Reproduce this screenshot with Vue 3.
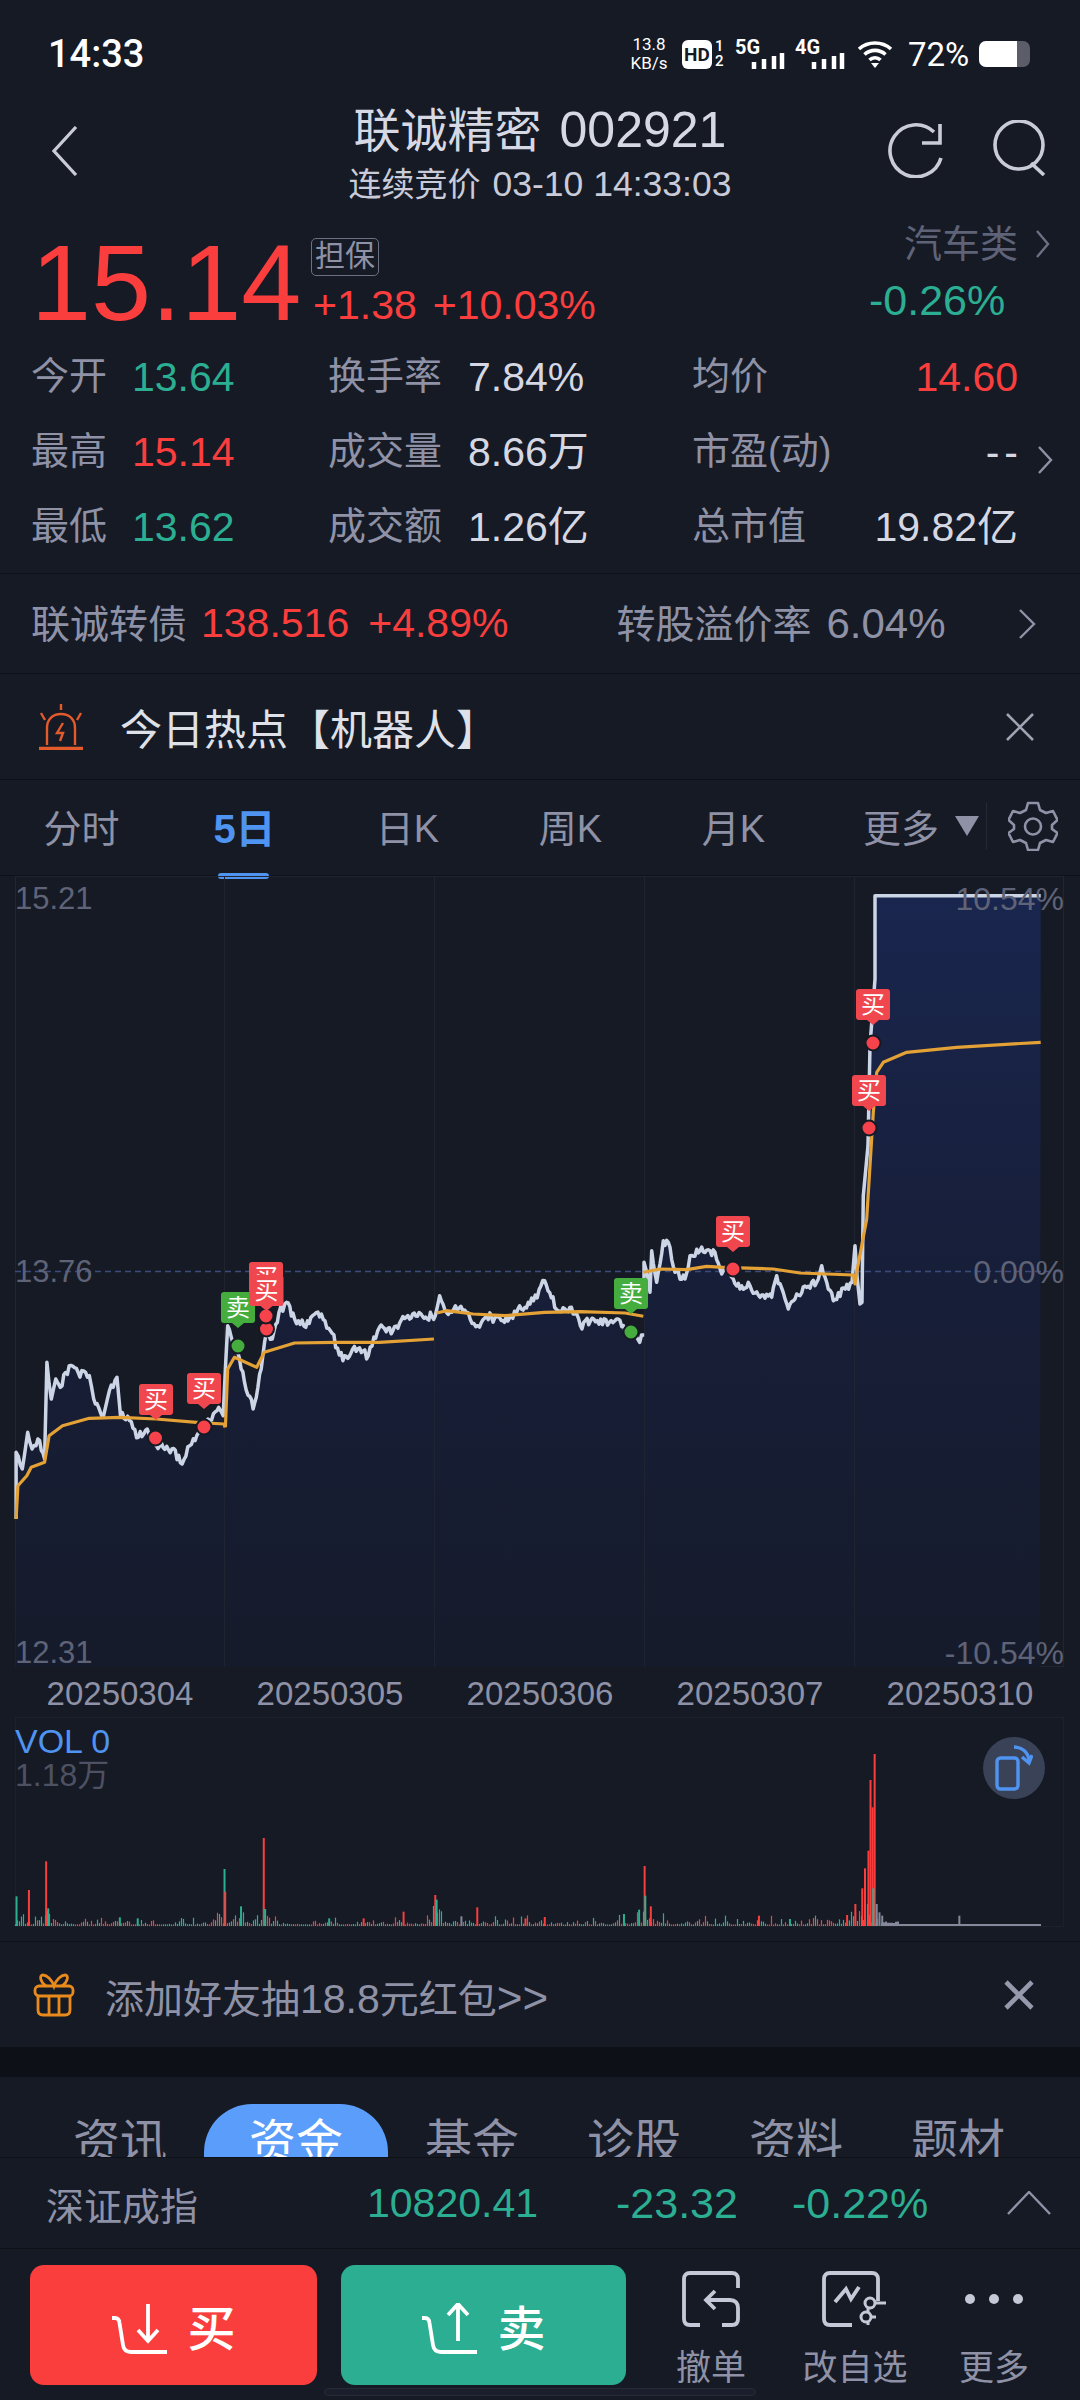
<template>
  <div class="page">
    <div class="status">
      <span class="clock">14:33</span>
      <div class="status-right">
        <div class="speed"><span>13.8</span><span>KB/s</span></div>
        <div class="hd">HD</div>
        <div class="sim"><span>1</span><span>2</span></div>
        <div class="net">
          <span>5G</span>
          <svg width="34" height="16" viewBox="0 0 34 16"><path d="M3 16V9M13 16V6M23 16V3M31 16V0" stroke="#fff" stroke-width="4.5" /></svg>
        </div>
        <div class="net net2">
          <span>4G</span>
          <svg width="34" height="16" viewBox="0 0 34 16"><path d="M3 16V9M13 16V6M23 16V3M31 16V0" stroke="#fff" stroke-width="4.5" /></svg>
        </div>
        <svg class="wifi" width="36" height="28" viewBox="0 0 36 28" fill="none" stroke="#fff" stroke-width="3.6">
          <path d="M2 9C11 1 25 1 34 9" />
          <path d="M7.5 14.500C13.500 9 22.500 9 28.500 14.500" />
          <path d="M12.500 20C15.500 17 20.500 17 23.500 20" />
          <path d="M18 28l-4-5h8z" fill="#fff" stroke="none" />
        </svg>
        <span class="batt-text">72%</span>
        <div class="battery"><div class="battery-fill"></div></div>
      </div>
    </div>

    <header class="head">
      <svg class="back" width="26" height="50" viewBox="0 0 26 50" fill="none" stroke="#c9ccd8" stroke-width="3.200"><path d="M24 1L2 25L24 49" /></svg>
      <div class="head-title">
        <div class="title">联诚精密<span class="code">002921</span></div>
        <div class="sub">连续竞价<span class="time">03-10 14:33:03</span></div>
      </div>
      <svg class="refresh" width="56" height="56" viewBox="0 0 56 56" fill="none" stroke="#c9ccd8" stroke-width="3.600">
        <path d="M46 10A26 26 0 1 0 53 36" />
        <path d="M52 2V21H34" />
      </svg>
      <svg class="search" width="56" height="56" viewBox="0 0 56 56" fill="none" stroke="#c9ccd8" stroke-width="3.600">
        <circle cx="27" cy="25" r="24" />
        <path d="M39 43L52 55" />
      </svg>
    </header>

    <section class="quote">
      <div class="price">15.14</div>
      <div class="quote-mid">
        <span class="tag">担保</span>
        <div class="change"><span>+1.38</span><span>+10.03%</span></div>
      </div>
      <div class="sector">
        <div class="sector-name">汽车类
          <svg width="14" height="28" viewBox="0 0 14 28" fill="none" stroke="#6d7084" stroke-width="2.400"><path d="M1 1L12 14L1 27" /></svg>
        </div>
        <div class="sector-pct">-0.26%</div>
      </div>
    </section>

    <section class="stats">
      <template v-for="row in stats" :key="row.a">
        <div class="stat stat-a"><span class="lab">{{ row.a }}</span><span :class="['val', row.ac]">{{ row.av }}</span></div>
        <div class="stat stat-b"><span class="lab">{{ row.b }}</span><span class="val">{{ row.bv }}</span></div>
        <div class="stat stat-c"><span class="lab">{{ row.c }}</span><span :class="['val', row.cc]">{{ row.cv }}</span></div>
      </template>
      <svg class="stats-arrow" width="16" height="28" viewBox="0 0 16 28" fill="none" stroke="#8f92a6" stroke-width="2.400"><path d="M2 1L14 14L2 27" /></svg>
    </section>

    <section class="bond">
      <span class="lab">联诚转债</span>
      <span class="red bond-num">138.516</span>
      <span class="red bond-pct">+4.89%</span>
      <span class="lab bond-lab2">转股溢价率</span>
      <span class="bond-rate">6.04%</span>
      <svg class="bond-arrow" width="18" height="30" viewBox="0 0 18 30" fill="none" stroke="#8f92a6" stroke-width="2.400"><path d="M2 1L16 15L2 29" /></svg>
    </section>

    <section class="hot">
      <svg class="alarm" width="46" height="46" viewBox="0 0 46 46" fill="none" stroke="#e35a2b" stroke-width="2.400">
        <path d="M23 0V6M3 9l4 7M43 9l-4 7" />
        <path d="M9 41V24C9 15 15 10 23 10S37 15 37 24V41" />
        <path d="M1 44.500H45" stroke-width="3.500" />
        <path d="M25 19l-6 10h6l-3 8" />
      </svg>
      <span class="hot-text">今日热点【机器人】</span>
      <svg class="hot-close" width="28" height="28" viewBox="0 0 28 28" fill="none" stroke="#a0a3b4" stroke-width="2.600"><path d="M1 1L27 27M27 1L1 27" /></svg>
    </section>

    <nav class="tabs">
      <div v-for="t in periods" :key="t" :class="['tab', { on: t === '5日' }]">{{ t }}</div>
      <div class="tab-more">
        <span>更多</span>
        <i class="tri"></i>
        <i class="tab-sep"></i>
        <svg width="50" height="50" viewBox="0 0 50 50" fill="none" stroke="#8f92a6" stroke-width="2.600">
          <path d="M20 2H30L32 9L38 12L45 10L49.500 19L44 24V28L49.500 32L45 41L38 39L32 42L30 49H20L18 42L12 39L5 41L.500 32L6 28V24L.500 19L5 10L12 12L18 9Z" stroke-linejoin="round" />
          <circle cx="25" cy="25.500" r="8" />
        </svg>
      </div>
    </nav>

    <section class="chart">
      <svg class="chart-svg" width="1080" height="791" viewBox="0 877 1080 791">
        <defs>
          <linearGradient id="areaFill" gradientUnits="userSpaceOnUse" x1="0" y1="890" x2="0" y2="1668">
            <stop offset="0" stop-color="#19264f" />
            <stop offset="0.5" stop-color="#171e38" />
            <stop offset="1" stop-color="#161b2b" />
          </linearGradient>
        </defs>
        <path :d="areaPath" fill="url(#areaFill)" />
        <path v-for="x in gridX" :key="x" :d="`M${x} 877V1668`" stroke="#1f2430" stroke-width="1" />
        <path d="M15 1272.500H1064" stroke="#3b4b7c" stroke-width="1.500" stroke-dasharray="6 4" />
        <path v-for="(p, i) in whitePaths" :key="'w' + i" :d="p" fill="none" stroke="#ccd5e6" stroke-width="3.500" stroke-linejoin="round" />
        <path v-for="(p, i) in avgPaths" :key="'a' + i" :d="p" fill="none" stroke="#e3a136" stroke-width="3.200" stroke-linejoin="round" />
        <g v-for="(m, i) in marks" :key="'m' + i">
          <circle :cx="m.dx" :cy="m.dy" r="7.500" :fill="m.sell ? '#45ad3e' : '#f6424a'" stroke="#161a25" stroke-width="2" />
          <path :d="`M${m.x - 17} ${m.y + 3}q0 -3 3 -3h28q3 0 3 3v25q0 3 -3 3h-8l-6 5l-6 -5h-8q-3 0 -3 -3z`" :fill="m.sell ? '#45ad3e' : '#f0474f'" />
          <text :x="m.x" :y="m.y + 24" text-anchor="middle" class="mark-text">{{ m.sell ? '卖' : '买' }}</text>
        </g>
      </svg>
      <span class="axis al at">15.21</span>
      <span class="axis al am">13.76</span>
      <span class="axis al ab">12.31</span>
      <span class="axis ar at">10.54%</span>
      <span class="axis ar am">0.00%</span>
      <span class="axis ar ab">-10.54%</span>
    </section>

    <div class="dates">
      <span v-for="d in dates" :key="d">{{ d }}</span>
    </div>

    <section class="vol">
      <svg class="vol-svg" width="1080" height="225" viewBox="0 1718 1080 225">
        <path v-for="(b, i) in volBars" :key="i" :d="`M${b.x} 1927V${b.y}`" :stroke="b.c" :stroke-width="b.w" />
      </svg>
      <div class="vol-title">VOL 0</div>
      <div class="vol-max">1.18万</div>
      <div class="rotate">
        <svg width="38" height="46" viewBox="0 0 38 46" fill="none" stroke="#4f94f0" stroke-width="3.400">
          <rect x="2" y="13" width="21" height="31" rx="3.500" />
          <path d="M19 2C27 2 33 7 34 15" />
          <path d="M27 12L34 18L37 10" />
        </svg>
      </div>
    </section>

    <section class="promo">
      <svg width="42" height="44" viewBox="0 0 42 44" fill="none" stroke="#e88a1c" stroke-width="2.800">
        <path d="M13 13C7 9 6 2 10 2C14 2 19 7 21 13C23 7 28 2 32 2C36 2 35 9 29 13" />
        <rect x="2" y="13" width="38" height="10" rx="4" />
        <path d="M5 23V37Q5 42 10 42H32Q37 42 37 37V23M16 23V42M26 23V42" />
      </svg>
      <span class="promo-text">添加好友抽<span class="promo-num">18.8</span>元红包<span class="promo-go">>></span></span>
      <svg class="promo-close" width="30" height="30" viewBox="0 0 30 30" fill="none" stroke="#9699ac" stroke-width="4.600"><path d="M2 2L28 28M28 2L2 28" /></svg>
    </section>

    <div class="band"></div>

    <nav class="subtabs">
      <div v-for="t in subTabs" :key="t" :class="['subtab', { on: t === '资金' }]">{{ t }}</div>
    </nav>

    <section class="index">
      <span class="index-name">深证成指</span>
      <span class="green index-val">10820.41</span>
      <span class="green index-chg">-23.32</span>
      <span class="green index-pct">-0.22%</span>
      <svg class="index-arrow" width="44" height="24" viewBox="0 0 44 24" fill="none" stroke="#8f92a6" stroke-width="2.400"><path d="M1 23L22 1L43 23" /></svg>
    </section>

    <footer class="bottom">
      <div class="btn buy">
        <svg width="62" height="52" viewBox="0 0 62 52" fill="none" stroke="#fff" stroke-width="3.800">
          <path d="M1 15H4Q8 15 8.500 20L12 42Q13 49 20 49H56" />
          <path d="M37 1V37M27 27L37 38L47 27" />
        </svg>
        <span>买</span>
      </div>
      <div class="btn sell">
        <svg width="62" height="52" viewBox="0 0 62 52" fill="none" stroke="#fff" stroke-width="3.800">
          <path d="M1 15H4Q8 15 8.500 20L12 42Q13 49 20 49H56" />
          <path d="M37 38V2M27 12L37 1L47 12" />
        </svg>
        <span>卖</span>
      </div>
      <div class="tool tool-undo">
        <svg width="58" height="56" viewBox="0 0 58 56" fill="none" stroke="#c5c8d6" stroke-width="3.800">
          <path d="M56 17V8Q56 2 50 2H8Q2 2 2 8V48Q2 54 8 54H18" />
          <path d="M40 54H50Q56 54 56 48V37Q56 29 48 29H25M33 20L24 29L33 38" />
        </svg>
        <span>撤单</span>
      </div>
      <div class="tool tool-edit">
        <svg width="66" height="58" viewBox="0 0 66 58" fill="none" stroke="#c5c8d6" stroke-width="3.800">
          <path d="M56 30V8Q56 2 50 2H8Q2 2 2 8V48Q2 54 8 54H30" />
          <path d="M13 31L24 18L29 28L37 16" />
          <path d="M46 27V54M38 46H54M54 32H64" stroke-width="3" />
          <circle cx="48" cy="32" r="5" stroke-width="3" fill="#161a25" />
          <circle cx="44" cy="46" r="5" stroke-width="3" fill="#161a25" />
        </svg>
        <span>改自选</span>
      </div>
      <div class="tool tool-more">
        <div class="dots"><i></i><i></i><i></i></div>
        <span>更多</span>
      </div>
      <div class="home-bar"></div>
    </footer>
  </div>
</template>

<script setup>
const stats = [
  { a: '今开', av: '13.64', ac: 'green', b: '换手率', bv: '7.84%', c: '均价', cv: '14.60', cc: 'red' },
  { a: '最高', av: '15.14', ac: 'red', b: '成交量', bv: '8.66万', c: '市盈(动)', cv: '--', cc: 'dash' },
  { a: '最低', av: '13.62', ac: 'green', b: '成交额', bv: '1.26亿', c: '总市值', cv: '19.82亿', cc: '' }
]
const periods = ['分时', '5日', '日K', '周K', '月K']
const dates = ['20250304', '20250305', '20250306', '20250307', '20250310']
const subTabs = ['资讯', '资金', '基金', '诊股', '资料', '题材']
const gridX = [224.5, 434.5, 644.5, 854.5]

// crude seeded random so the picture stays the same between runs
let seed = 20250310
const rnd = () => {
  seed = (seed * 1664525 + 1013904223) % 4294967296
  return seed / 4294967296
}

const z3 = (pts) => pts.map(([x, y]) => [x / 2.24, 1200 + y / 3])
const z4 = (pts) => pts.map(([x, y]) => [640 + x / 3, 880 + y / 3])

// adds small ticks between key points on the flat parts of the line
const jag = (pts, amp) => {
  const out = []
  for (let i = 0; i < pts.length - 1; i++) {
    const [x0, y0] = pts[i]
    const [x1, y1] = pts[i + 1]
    out.push([x0, y0])
    const dx = x1 - x0
    if (dx < 3) continue
    const steps = Math.floor(dx / 1.6)
    for (let s = 1; s < steps; s++) {
      const t = s / steps
      out.push([x0 + dx * t, y0 + (y1 - y0) * t + (rnd() - 0.5) * amp])
    }
  }
  out.push(pts[pts.length - 1])
  return out
}

const toPath = (pts) => 'M' + pts.map(([x, y]) => `${x.toFixed(1)} ${y.toFixed(1)}`).join('L')

const whiteA = jag(z3([
  [36, 960], [36, 760], [50, 810], [62, 700], [72, 750], [85, 720], [100, 780], [105, 490], [115, 600], [125, 540], [135, 565],
  [155, 500], [175, 520], [200, 530], [210, 600], [232, 650], [245, 575], [262, 535], [270, 650], [290, 665], [310, 715],
  [330, 690], [350, 740], [385, 750], [408, 795], [425, 740], [445, 700], [470, 665], [490, 625], [500, 650], [510, 380],
  [525, 430], [540, 510], [567, 630], [585, 510], [597, 400], [610, 420], [625, 340], [642, 310], [660, 360], [685, 385],
  [700, 350], [720, 345], [740, 395], [768, 485], [790, 450], [825, 470], [850, 385], [880, 395], [910, 355], [975, 350],
  [985, 290], [1000, 340], [1020, 320], [1045, 340], [1070, 380], [1090, 350], [1130, 370], [1160, 330], [1195, 305],
  [1220, 245], [1250, 335], [1280, 325], [1300, 380], [1330, 360], [1365, 370], [1385, 360], [1400, 395]
]), 9)
const whiteB = z3([[1425, 412], [1433, 430], [1437, 408], [1443, 408]])
const whiteC = [
  ...jag(z4([
    [12, 1240], [12, 1150], [20, 1180], [30, 1240], [35, 1115], [50, 1210], [70, 1085], [90, 1105], [105, 1180], [135, 1200],
    [150, 1130], [180, 1115], [225, 1120], [245, 1185], [262, 1170], [280, 1200], [300, 1230], [330, 1220], [360, 1255],
    [395, 1255], [410, 1190], [445, 1290], [470, 1245], [530, 1210], [545, 1160], [580, 1265], [636, 1210]
  ]), 8),
  ...z4([[645, 1100], [652, 1200], [660, 1275], [666, 1270], [670, 950], [684, 800], [690, 500], [705, 300], [705, 50], [1202, 50]])
]
const whitePaths = [toPath(whiteA), toPath(whiteB), toPath(whiteC)]

const areaPath = toPath([[15.5, 1668], ...whiteA, ...whiteB, ...whiteC, [1040, 1668]]) + 'Z'

const avgPaths = [
  z3([[36, 960], [40, 860], [60, 830], [70, 805], [100, 790], [110, 710], [140, 680], [200, 658], [270, 655], [350, 660], [440, 670], [502, 675], [504, 685]]),
  z3([[505, 685], [510, 510], [525, 475], [575, 505], [592, 460], [660, 432], [750, 430], [850, 430], [972, 420]]),
  z3([[978, 342], [1000, 335], [1060, 345], [1130, 350], [1220, 340], [1300, 338], [1400, 342], [1441, 352]]),
  z4([[10, 1180], [60, 1170], [140, 1172], [200, 1162], [250, 1165], [400, 1170], [480, 1182], [640, 1188], [645, 1215], [650, 1180], [680, 1020], [700, 700], [710, 580], [730, 550], [800, 520], [950, 505], [1202, 490]])
].map(toPath)

const marks = [
  { x: 156, y: 1385, dx: 155.5, dy: 1439 },
  { x: 204, y: 1374, dx: 204, dy: 1428 },
  { x: 266, y: 1263, dx: 266.5, dy: 1330 },
  { x: 238, y: 1293, dx: 238, dy: 1347, sell: true },
  { x: 266.5, y: 1276, dx: 266, dy: 1317 },
  { x: 631, y: 1279, dx: 631, dy: 1333, sell: true },
  { x: 733, y: 1217, dx: 733, dy: 1270 },
  { x: 873, y: 990, dx: 873, dy: 1044 },
  { x: 869, y: 1076, dx: 869, dy: 1129 }
]

const RED = '#fa3e3e'
const GRN = '#2bae92'
const GRY = '#85889b'

const volBars = []
const hot = [[15, 26], [46, 16], [224, 24], [240, 20], [262, 16], [436, 24], [644, 28], [650, 16], [855, 30], [870, 34]]
for (let x = 15.5; x < 884; x += 2) {
  const near = hot.reduce((m, [hx, h]) => Math.max(m, h * Math.max(0, 1 - Math.abs(x - hx) / 14)), 0)
  const h = 1.5 + rnd() * rnd() * rnd() * 14 + near * rnd() * rnd()
  volBars.push({ x, y: 1927 - h, c: rnd() > 0.5 ? RED : GRN, w: 1.2 })
}
for (let x = 884; x < 1042; x += 2) {
  volBars.push({ x, y: 1927 - (x < 900 ? 2 + rnd() * 3 : 2), c: GRY, w: 2 })
}
const spikes = [
  [24, 712, GRN], [42, 693, RED], [67, 607, RED], [70, 748, GRN], [174, 775, GRN], [200, 778, GRN], [326, 630, GRN], [327, 698, RED],
  [350, 742, GRN], [383, 537, RED], [385, 750, GRN], [478, 778, GRN], [528, 778, RED], [586, 758, RED], [632, 708, RED], [634, 722, GRN],
  [670, 772, GRY], [693, 745, RED], [763, 778, RED], [791, 774, RED], [906, 765, GRN], [928, 752, GRN], [936, 621, RED], [937, 710, GRN],
  [945, 742, RED], [1102, 770, RED], [1147, 780, GRN], [1230, 768, RED], [1242, 735, RED], [1252, 688, RED], [1256, 628, RED],
  [1261, 575, RED], [1264, 363, RED], [1267, 445, RED], [1270, 285, RED], [1268, 688, GRN], [1273, 735, GRY], [1277, 760, GRY], [1281, 770, GRY], [1393, 770, GRY]
]
spikes.forEach(([x, y, c]) => volBars.push({ x: x / 1.452, y: 1660 + y / 3, c, w: 2 }))
</script>

<style>
html, body {
  margin: 0;
  background: #161a25;
}
</style>

<style scoped>
.page {
  position: relative;
  width: 1080px;
  height: 2400px;
  overflow: hidden;
  background: #161a25;
  color: #d5d8e3;
  font-family: "Liberation Sans", "Noto Sans CJK SC", sans-serif;
  display: flex;
  flex-direction: column;
}

.red { color: #fa3e3e; }
.green { color: #2bae92; }
.lab { color: #8f92a6; }

.status {
  height: 90px;
  flex: none;
  display: flex;
  align-items: center;
  justify-content: space-between;
  padding: 18px 50px 0 48px;
  box-sizing: border-box;
  color: #fff;
  font-family: Roboto, sans-serif;
}
.clock {
  font-size: 38px;
  font-weight: 500;
}
.status-right {
  display: flex;
  align-items: center;
}
.speed {
  display: flex;
  flex-direction: column;
  align-items: center;
  font-size: 17px;
  line-height: 19px;
  width: 40px;
}
.hd {
  margin-left: 13px;
  width: 30px;
  height: 29px;
  background: #fff;
  border-radius: 6px;
  color: #161a25;
  font-size: 19px;
  font-weight: 700;
  line-height: 29px;
  text-align: center;
}
.sim {
  display: flex;
  flex-direction: column;
  margin-left: 3px;
  font-size: 15px;
  font-weight: 500;
  line-height: 15px;
  width: 10px;
}
.net {
  position: relative;
  margin-left: 10px;
  width: 50px;
  height: 30px;
}
.net span {
  position: absolute;
  left: 0;
  top: -4px;
  font-size: 20px;
  font-weight: 700;
  line-height: 24px;
}
.net svg {
  position: absolute;
  right: 0;
  top: 14px;
}
.net2 {
  margin-left: 10px;
}
.wifi {
  margin-left: 12px;
}
.batt-text {
  margin-left: 15px;
  font-size: 33px;
  width: 60px;
}
.battery {
  margin-left: 11px;
  width: 51px;
  height: 26px;
  background: #5b5e68;
  border-radius: 7px;
  overflow: hidden;
}
.battery-fill {
  width: 38px;
  height: 100%;
  background: #fff;
}

.head {
  position: relative;
  height: 125px;
  flex: none;
}
.back {
  position: absolute;
  left: 52px;
  top: 36px;
}
.refresh {
  position: absolute;
  left: 888px;
  top: 32px;
}
.search {
  position: absolute;
  left: 992px;
  top: 30px;
}
.head-title {
  text-align: center;
  padding-top: 10px;
}
.title {
  font-size: 47px;
  line-height: 60px;
  height: 60px;
  color: #d6d9e4;
}
.code {
  margin-left: 18px;
  font-size: 50px;
}
.sub {
  font-size: 33px;
  line-height: 44px;
  height: 44px;
  color: #c9ccd8;
  margin-top: 2px;
}
.time {
  margin-left: 12px;
  font-size: 35.500px;
}

.quote {
  position: relative;
  height: 124px;
  flex: none;
  display: flex;
}
.price {
  font-size: 108px;
  line-height: 130px;
  height: 130px;
  color: #fa3e3e;
  margin-left: 31px;
  margin-top: 3px;
  width: 280px;
  flex: none;
}
.quote-mid {
  padding-top: 23px;
}
.tag {
  display: block;
  width: 66px;
  height: 36px;
  border: 1.500px solid #6d7084;
  border-radius: 5px;
  color: #8f92a6;
  font-size: 30px;
  line-height: 34px;
  text-align: center;
}
.change {
  display: flex;
  gap: 16px;
  font-size: 41px;
  line-height: 46px;
  color: #fa3e3e;
  margin-top: 6px;
  margin-left: 2px;
}
.sector {
  position: absolute;
  left: 869px;
  top: 5px;
  width: 190px;
}
.sector-name {
  display: flex;
  align-items: center;
  gap: 18px;
  margin-left: 35px;
  font-size: 38px;
  line-height: 48px;
  height: 48px;
  color: #5f6377;
}
.sector-pct {
  font-size: 43px;
  line-height: 50px;
  color: #2bae92;
  margin-top: 7px;
}

.stats {
  position: relative;
  height: 234px;
  flex: none;
  box-sizing: border-box;
  padding: 0 0 0 31px;
  display: grid;
  grid-template-columns: 297px 364px 326px;
  grid-auto-rows: 75px;
}
.stat {
  display: flex;
  align-items: center;
  font-size: 38px;
}
.stat .lab {
  line-height: 50px;
  height: 50px;
  margin-top: -1px;
}
.stat .val {
  font-size: 41px;
  line-height: 50px;
}
.stat-a .lab { width: 101px; }
.stat-b .lab { width: 140px; }
.stat-c { justify-content: space-between; }
.stat .dash { letter-spacing: 5px; margin-right: -5px; }
.stats-arrow {
  position: absolute;
  left: 1037px;
  top: 107px;
}

.bond {
  height: 101px;
  flex: none;
  box-sizing: border-box;
  border-top: 1.500px solid #0e1118;
  border-bottom: 1.500px solid #0e1118;
  display: flex;
  align-items: center;
  padding-left: 31px;
  font-size: 39px;
}
.bond .lab {
  line-height: 50px;
  height: 50px;
  margin-top: 2px;
}
.bond-num {
  margin-left: 14px;
  font-size: 41px;
}
.bond-pct {
  margin-left: 19px;
  font-size: 41px;
}
.bond-lab2 {
  margin-left: 108px;
}
.bond-rate {
  margin-left: 15px;
  color: #8f92a6;
  font-size: 42px;
}
.bond-arrow {
  margin-left: auto;
  margin-right: 44px;
}

.hot {
  height: 106px;
  flex: none;
  box-sizing: border-box;
  border-bottom: 1.500px solid #0e1118;
  display: flex;
  align-items: center;
  padding: 0 46px 0 38px;
}
.hot-text {
  margin-left: 36px;
  font-size: 42px;
  color: #dfe1e9;
}
.hot-close {
  margin-left: auto;
}

.tabs {
  position: relative;
  height: 96px;
  flex: none;
  display: flex;
  align-items: center;
  border-bottom: 1.500px solid #0e1118;
  box-sizing: border-box;
}
.tab {
  width: 163px;
  text-align: center;
  font-size: 38px;
  color: #8f92a6;
  padding-bottom: 4px;
}
.tab.on {
  position: relative;
  color: #4f94f0;
  font-size: 40px;
  font-weight: 600;
}
.tab.on::after {
  content: "";
  position: absolute;
  left: 55px;
  bottom: -20px;
  width: 51px;
  height: 6px;
  border-radius: 3px;
  background: #4f94f0;
}
.tab-more {
  display: flex;
  align-items: center;
  margin-left: 48px;
  font-size: 38px;
  color: #8f92a6;
  padding-bottom: 4px;
}
.tri {
  width: 0;
  height: 0;
  margin-left: 16px;
  border-left: 12px solid transparent;
  border-right: 12px solid transparent;
  border-top: 20px solid #8f92a6;
}
.tab-sep {
  width: 1px;
  height: 46px;
  margin: 0 21px 0 7px;
  background: #262a36;
}

.chart {
  position: relative;
  height: 791px;
  flex: none;
}
.chart-svg {
  position: absolute;
  left: 0;
  top: 0;
}
.chart::before {
  content: "";
  position: absolute;
  left: 15px;
  right: 16px;
  top: 0;
  bottom: 0;
  border: 1.500px solid #20252f;
  box-sizing: border-box;
}
.mark-text {
  fill: #fff;
  font-size: 24px;
}
.axis {
  position: absolute;
  line-height: 36px;
  color: #5f6377;
}
.al { left: 15px; font-size: 31px; }
.ar { right: 16px; font-size: 32px; }
.at { top: 5px; }
.am { top: 378px; }
.ab { top: 759px; }

.dates {
  height: 50px;
  flex: none;
  box-sizing: border-box;
  padding: 3px 0 0 15px;
  display: grid;
  grid-template-columns: repeat(5, 210px);
  align-items: center;
  text-align: center;
  font-size: 33px;
  color: #8f92a6;
}

.vol {
  position: relative;
  height: 225px;
  flex: none;
  box-sizing: border-box;
  border-bottom: 1.500px solid #0e1118;
}
.vol-svg {
  position: absolute;
  left: 0;
  top: 0;
}
.vol::before {
  content: "";
  position: absolute;
  left: 15px;
  right: 16px;
  top: 0;
  height: 210px;
  border: 1.500px solid #1d2129;
  box-sizing: border-box;
}
.vol-title {
  position: absolute;
  left: 15px;
  top: 5px;
  font-size: 34px;
  line-height: 38px;
  color: #4f94f0;
}
.vol-max {
  position: absolute;
  left: 15px;
  top: 39px;
  font-size: 32px;
  line-height: 38px;
  color: #4d5162;
}
.rotate {
  position: absolute;
  left: 983px;
  top: 20px;
  width: 62px;
  height: 62px;
  border-radius: 50%;
  background: #3a4258;
  display: flex;
  align-items: center;
  justify-content: center;
}

.promo {
  height: 105px;
  flex: none;
  display: flex;
  align-items: center;
  padding: 0 46px 0 33px;
}
.promo-text {
  margin-left: 30px;
  font-size: 39px;
  color: #8f92a6;
  position: relative;
  top: 1px;
}
.promo-num {
  font-size: 41px;
}
.promo-go {
  font-size: 44px;
}
.promo-close {
  margin-left: auto;
}

.band {
  height: 30px;
  flex: none;
  background: #0d1016;
}

.subtabs {
  height: 81px;
  flex: none;
  overflow: hidden;
  box-sizing: border-box;
  padding: 27px 0 0 73px;
  display: flex;
  gap: 68px;
  border-bottom: 1.500px solid #0e1118;
}
.subtab {
  flex: none;
  padding-top: 8px;
  height: 100px;
  box-sizing: border-box;
  font-size: 47px;
  line-height: 60px;
  color: #8f92a6;
}
.subtab.on {
  margin: 0 -31px;
  padding: 8px 45px 0;
  border-radius: 48px 48px 0 0;
  background: #5b9dfb;
  color: #fff;
}

.index {
  height: 91px;
  flex: none;
  display: flex;
  align-items: center;
  box-sizing: border-box;
  border-bottom: 1.500px solid #0e1118;
  padding-left: 46px;
  font-size: 43px;
}
.index-name {
  width: 321px;
  font-size: 38px;
  color: #8f92a6;
}
.index-val { width: 249px; font-size: 41px; }
.index-chg { width: 176px; }
.index-pct { width: 215px; }

.bottom {
  position: relative;
  flex: 1;
  display: flex;
  padding: 16px 0 0 30px;
}
.btn {
  height: 120px;
  border-radius: 14px;
  color: #fff;
  display: flex;
  align-items: center;
  justify-content: center;
  gap: 14px;
  font-size: 48px;
  font-weight: 500;
}
.buy {
  width: 287px;
  background: #fa3e3e;
}
.sell {
  width: 285px;
  margin-left: 24px;
  background: #2bae92;
}
.btn svg {
  margin-top: 8px;
}
.tool {
  position: absolute;
  top: 22px;
  width: 130px;
  height: 120px;
  display: flex;
  flex-direction: column;
  align-items: center;
  font-size: 35px;
  color: #8f92a6;
}
.tool span {
  position: absolute;
  top: 75px;
  line-height: 44px;
}
.tool-undo { left: 646px; }
.tool-edit { left: 790px; }
.tool-more { left: 929px; }
.dots {
  display: flex;
  gap: 14px;
  margin-top: 23px;
}
.dots i {
  width: 10px;
  height: 10px;
  border-radius: 50%;
  background: #c5c8d6;
}
.home-bar {
  position: absolute;
  left: 324px;
  top: 139px;
  width: 432px;
  height: 8px;
  box-sizing: border-box;
  border: 1.500px solid #262b3a;
  border-radius: 4px;
  background: #1b1f2c;
}
</style>
